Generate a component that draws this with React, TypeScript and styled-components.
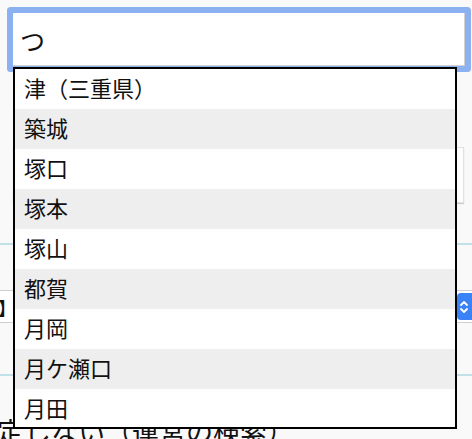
import styled, { createGlobalStyle } from 'styled-components'

const stations = ['津（三重県）', '築城', '塚口', '塚本', '塚山', '都賀', '月岡', '月ケ瀬口', '月田']

export default function App() {
  return (
    <>
      <GlobalStyle />
      <Page>
        <SearchArea>
          <SearchInput value="つ" readOnly />
          <Suggestions>
            {stations.map((name) => (
              <Suggestion key={name}>{name}</Suggestion>
            ))}
          </Suggestions>
        </SearchArea>

        <Card />
        <Divider />

        <Scrolled>
          <Select>
            <SelectText>【沿線】</SelectText>
            <Spinner>
              <svg width="10" height="16" viewBox="0 0 10 16" fill="none">
                <path d="M2 6 L5 3 L8 6" stroke="#fff" strokeWidth="1.8" strokeLinecap="round" strokeLinejoin="round" />
                <path d="M2 10 L5 13 L8 10" stroke="#fff" strokeWidth="1.8" strokeLinecap="round" strokeLinejoin="round" />
              </svg>
            </Spinner>
          </Select>
        </Scrolled>

        <Divider $top={51} />

        <Scrolled>
          <Hint>指定しない（運営の検索）</Hint>
        </Scrolled>
      </Page>
    </>
  )
}

const GlobalStyle = createGlobalStyle`
  body {
    margin: 0;
    background: #f9f9f9;
    font-family: "Noto Sans CJK JP", "Noto Sans", sans-serif;
    color: #111;
  }
`

const Page = styled.div`
  width: 472px;
  height: 439px;
  overflow: hidden;
`

const SearchArea = styled.div`
  position: relative;
  padding: 13px 7px 0 13px;
`

const SearchInput = styled.input`
  display: block;
  box-sizing: border-box;
  width: 452px;
  height: 53px;
  margin: 0;
  padding: 0 6px;
  border: 1px solid;
  border-color: transparent #d2d2d2 #d2d2d2 transparent;
  border-radius: 1px;
  background: #fff;
  box-shadow: 0 0 0 6px #8cb1f1;
  outline: none;
  font-family: "Noto Sans CJK JP", sans-serif;
  font-size: 25px;
  color: #111;
`

const Suggestions = styled.ul`
  position: absolute;
  top: 67px;
  left: 13px;
  z-index: 2;
  box-sizing: border-box;
  width: 444px;
  height: 362px;
  margin: 0;
  padding: 0;
  list-style: none;
  overflow: hidden;
  background: #fff;
  border: 2px solid #000;
`

const Suggestion = styled.li`
  box-sizing: border-box;
  height: 40px;
  padding: 0 0 3px 9px;
  font-size: 22px;
  line-height: 37px;
  color: #111;
  background: #fff;

  &:nth-child(even) {
    background: #eeeeee;
  }
`

const Card = styled.div`
  box-sizing: border-box;
  height: 56px;
  margin: 81px 8px 0 13px;
  background: #fdfdfd;
  border: 1px solid #e0e0e0;
  box-shadow: 0 1px 1px rgba(0, 0, 0, 0.18);
`

const Divider = styled.div<{ $top?: number }>`
  height: 2px;
  margin-top: ${({ $top }) => $top ?? 40}px;
  background: #c2e0e8;
`

const Scrolled = styled.div`
  width: 540px;
  margin-left: -60px;
`

const Select = styled.div`
  box-sizing: border-box;
  display: flex;
  align-items: center;
  height: 33px;
  margin-top: 45px;
  padding: 2px 2px 2px 3px;
  background: #fff;
  border: 1px solid #cfcfcf;
  border-radius: 4px;
`

const SelectText = styled.span`
  font-size: 18px;
  font-weight: 700;
  color: #111;
`

const Spinner = styled.span`
  display: flex;
  align-items: center;
  justify-content: center;
  width: 20px;
  height: 27px;
  margin-left: auto;
  background: #3b82f6;
  border-radius: 4px;
  svg {
    margin-right: 6px;
  }
`

const Hint = styled.div`
  margin-top: 39px;
  padding-left: 30px;
  font-size: 27px;
  line-height: 1.2;
  color: #111;
`
